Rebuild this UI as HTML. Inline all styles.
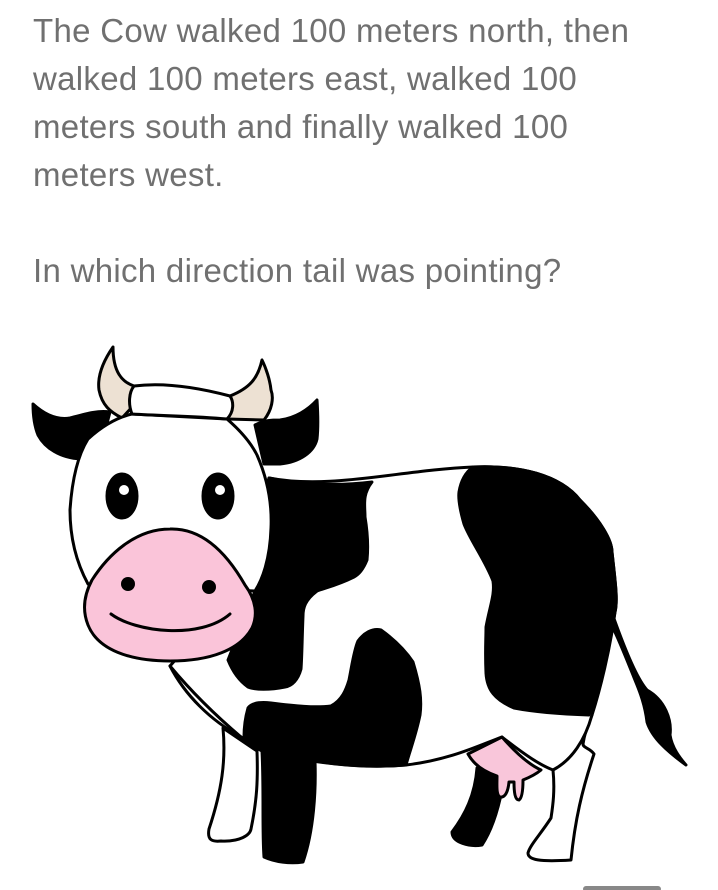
<!DOCTYPE html>
<html><head><meta charset="utf-8"><style>
html,body{margin:0;padding:0;background:#fff;width:718px;height:890px;overflow:hidden;position:relative}
.t{position:absolute;left:33px;font-family:"Liberation Sans",sans-serif;font-size:33px;letter-spacing:0.3px;color:#707070;white-space:nowrap;line-height:48px}
svg{position:absolute;left:0;top:0}
</style></head><body>
<div class="t" style="top:7px">The Cow walked 100 meters north, then</div>
<div class="t" style="top:55px">walked 100 meters east, walked 100</div>
<div class="t" style="top:103px">meters south and finally walked 100</div>
<div class="t" style="top:151px">meters west.</div>
<div class="t" style="top:247px">In which direction tail was pointing?</div>
<svg width="718" height="890" viewBox="0 0 718 890" stroke="#000" stroke-width="3" stroke-linejoin="round" stroke-linecap="round">
<path d="M612 613 C625 650 638 680 647 690 C665 700 672 720 670 735 C672 748 680 758 686 765 C668 752 652 738 647 722 C645 705 640 692 635 680 C625 655 615 630 605 612 Z" fill="#000"/>
<path d="M553 770 C555 790 553 805 551 818 C540 835 530 845 528 853 C528 860 540 862 571 860 C575 820 582 790 594 754 C590 748 583 748 583 744 C585 730 590 720 592 715 Z" fill="#fff"/>
<path d="M477 768 C475 795 465 815 452 832 C452 843 470 847 482 845 C492 830 498 810 502 790 L505 770 Z" fill="#000"/>
<path d="M223 728 C226 760 222 790 209 829 C207 840 212 842 221 841 C240 842 250 835 251 829 C257 800 258 780 257 751 Z" fill="#fff"/>
<path d="M269 478 C330 490 400 470 473 467 C520 465 560 475 580 500 C600 520 612 540 612 552 C615 580 618 600 615 612 C610 650 600 690 592 715 C585 740 572 760 553 770 C540 765 525 755 502 737 C480 745 450 760 406 765 C370 768 340 765 312 761 L262 751 C250 745 245 740 241 737 C215 715 190 690 170 666 L228 600 Z" fill="#fff"/>
<path d="M269 478 C300 485 340 486 372 482 C362 495 365 505 365 517 C368 535 368 550 367 560 C363 570 358 575 354 577 C338 585 325 588 317 591 C305 600 303 608 303 616 C302 640 302 655 301 669 C298 680 292 686 285 687 C270 690 255 690 248 687 C238 680 232 670 228 660 L255 591 C265 570 273 550 271 528 C270 505 270 490 269 478 Z" fill="#000"/>
<path d="M473 467 C520 465 560 475 580 500 C600 520 612 540 612 552 C615 580 618 600 615 612 C608 650 598 690 589 715 C560 714 535 712 514 708 C495 700 487 690 486 673 C485 650 486 640 486 627 C490 605 495 595 493 581 C485 560 470 540 464 524 C460 510 458 500 459 492 C461 480 466 472 473 467 Z" fill="#000"/>
<path d="M381 630 C395 640 405 650 413 662 C420 685 422 700 420 715 C416 735 410 750 406 765 C370 768 340 765 315 761 C316 790 314 830 303 862 C290 864 275 862 264 857 C262 830 264 790 262 751 C255 745 248 742 244 737 C244 725 246 715 248 708 C252 702 262 702 271 703 C295 706 315 708 331 706 C342 700 346 690 349 680 C352 665 354 650 358 641 C364 633 372 628 381 630 Z" fill="#000"/>
<path d="M468 754 C480 748 492 742 502 737 C515 752 528 764 541 770 C535 775 528 778 523 780 C523 790 522 798 519 800 C515 800 514 792 514 782 L509 782 C508 792 505 798 500 797 C496 795 497 785 497 776 C485 772 474 765 468 754 Z" fill="#f9c6da"/>
<path d="M113 347 C104 360 97 375 99 390 C102 405 110 412 122 418 L134 405 L134 386 C122 382 113 372 113 347 Z" fill="#ede1d3"/>
<path d="M262 360 C258 378 250 388 230 396 L227 419 L264 420 C272 410 274 398 271 390 C270 380 266 368 262 360 Z" fill="#ede1d3"/>
<path d="M33 404 C45 415 58 420 70 418 C85 414 98 410 110 412 L100 450 C95 458 88 460 81 459 C60 458 45 448 38 435 C34 425 33 412 33 404 Z" fill="#000"/>
<path d="M317 400 C318 415 318 430 317 439 C314 452 300 462 280 464 L264 464 L255 425 C265 420 272 420 280 420 C295 418 308 410 317 400 Z" fill="#000"/>
<path d="M132 414 L227 419 C242 432 252 445 257 455 C268 480 272 505 271 528 C270 560 262 580 255 591 L88 584 C75 560 70 535 70 510 C72 480 78 455 88 439 C100 428 115 418 132 414 Z" fill="#fff"/>
<path d="M134 386 C165 382 200 388 230 396 C234 402 234 412 227 419 C195 416 165 416 132 414 C128 404 129 392 134 386 Z" fill="#fff"/>
<ellipse cx="122" cy="496" rx="15" ry="22" fill="#000"/>
<ellipse cx="218" cy="496" rx="15" ry="22" fill="#000"/>
<circle cx="124" cy="490" r="5" fill="#fff" stroke="none"/>
<circle cx="220" cy="490" r="5" fill="#fff" stroke="none"/>
<path d="M170 529 C200 528 225 550 245 585 C256 600 258 615 252 628 C240 650 210 661 170 661 C130 661 98 650 88 625 C82 610 84 595 92 580 C108 555 135 529 170 529 Z" fill="#fac4d9"/>
<circle cx="128" cy="584" r="7" fill="#000" stroke="none"/>
<circle cx="209" cy="587" r="7" fill="#000" stroke="none"/>
<path d="M111 614 C135 632 200 640 230 614" fill="none"/>
<path d="M170 666 C185 695 210 720 241 737" fill="none"/>
</svg>
<div style="position:absolute;left:583px;top:886px;width:78px;height:6px;border-radius:3px;background:#888"></div>
</body></html>
